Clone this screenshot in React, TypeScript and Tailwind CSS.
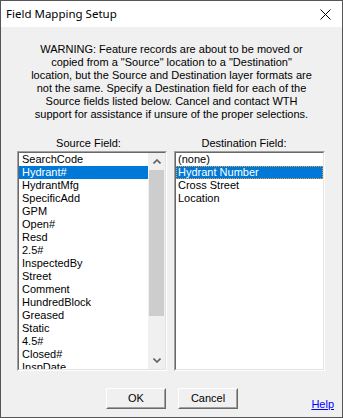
import React from "react";

const sourceFields = [
  "SearchCode",
  "Hydrant#",
  "HydrantMfg",
  "SpecificAdd",
  "GPM",
  "Open#",
  "Resd",
  "2.5#",
  "InspectedBy",
  "Street",
  "Comment",
  "HundredBlock",
  "Greased",
  "Static",
  "4.5#",
  "Closed#",
  "InspDate",
];

const destFields = ["(none)", "Hydrant Number", "Cross Street", "Location"];

function Chevron({ up }: { up: boolean }) {
  return (
    <svg width="8" height="5" viewBox="0 0 8 5" className="block">
      <path
        d={up ? "M0.5 4.5 L4 1 L7.5 4.5" : "M0.5 0.5 L4 4 L7.5 0.5"}
        stroke="#606060"
        strokeWidth="1.6"
        fill="none"
      />
    </svg>
  );
}

export default function App() {
  return (
    <div
      className="w-[343px] h-[418px] border border-[#555555] bg-[#f0f0f0] flex flex-col text-black overflow-hidden"
      style={{ fontFamily: '"Liberation Sans", Arial, sans-serif' }}
    >
      {/* Title bar */}
      <div className="h-[26px] bg-white flex items-center justify-between pl-[5px] pr-[11px] shrink-0">
        <span
          className="text-[11.5px] leading-none"
          style={{ fontFamily: '"Noto Sans", "Open Sans", sans-serif' }}
        >
          Field Mapping Setup
        </span>
        <svg width="11" height="11" viewBox="0 0 11 11">
          <path d="M0.5 0.5 L10.5 10.5 M10.5 0.5 L0.5 10.5" stroke="#000" strokeWidth="1" />
        </svg>
      </div>

      {/* Body */}
      <div className="flex-1 flex flex-col">
        <p className="mt-[16px] text-center text-[11px] leading-[13px]">
          WARNING: Feature records are about to be moved or
          <br />
          copied from a &quot;Source&quot; location to a &quot;Destination&quot;
          <br />
          location, but the Source and Destination layer formats are
          <br />
          not the same. Specify a Destination field for each of the
          <br />
          Source fields listed below. Cancel and contact WTH
          <br />
          support for assistance if unsure of the proper selections.
        </p>

        <div className="mt-[16px] flex pl-[16px] gap-[7px]">
          {/* Source column */}
          <div className="w-[150px] flex flex-col">
            <div className="text-center text-[11px] leading-[13px] pr-[7px]">Source Field:</div>
            <div className="mt-[1px] h-[220px] border-t-[#a0a0a0] border-l-[#a0a0a0] border-b-white border-r-white border">
              <div className="h-full border border-t-[#696969] border-l-[#696969] border-b-[#e3e3e3] border-r-[#e3e3e3] bg-white flex overflow-hidden">
                <div className="flex-1 flex flex-col overflow-hidden">
                  {sourceFields.map((f, i) => (
                    <div
                      key={f}
                      className={
                        "h-[13px] shrink-0 pl-[3px] text-[11px] leading-[13px] whitespace-nowrap " +
                        (i === 1 ? "bg-[#0078d7] text-white" : "")
                      }
                    >
                      {f}
                    </div>
                  ))}
                </div>
                <div className="w-[17px] shrink-0 bg-[#f0f0f0] flex flex-col">
                  <div className="h-[17px] flex items-center justify-center">
                    <Chevron up />
                  </div>
                  <div className="h-[146px] bg-[#cdcdcd] mx-[1px]" />
                  <div className="flex-1" />
                  <div className="h-[17px] flex items-center justify-center">
                    <Chevron up={false} />
                  </div>
                </div>
              </div>
            </div>
          </div>

          {/* Destination column */}
          <div className="w-[151px] flex flex-col">
            <div className="text-center text-[11px] leading-[13px] pr-[11px]">Destination Field:</div>
            <div className="mt-[1px] h-[220px] border-t-[#a0a0a0] border-l-[#a0a0a0] border-b-white border-r-white border">
              <div className="h-full border border-t-[#696969] border-l-[#696969] border-b-[#e3e3e3] border-r-[#e3e3e3] bg-white flex flex-col overflow-hidden">
                {destFields.map((f, i) => (
                  <div
                    key={f}
                    className={
                      "h-[13px] shrink-0 pl-[2px] text-[11px] leading-[13px] whitespace-nowrap " +
                      (i === 1
                        ? "bg-[#0078d7] text-white outline-1 outline-dotted outline-[#f0a030] -outline-offset-1"
                        : "")
                    }
                  >
                    {f}
                  </div>
                ))}
              </div>
            </div>
          </div>
        </div>

        {/* Buttons */}
        <div className="mt-[17px] flex items-start">
          <div className="ml-[105px] flex gap-[12px]">
            <button className="w-[60px] h-[21px] bg-[#f0f0f0] border border-t-white border-l-white border-b-[#696969] border-r-[#696969] text-[11px] leading-none">
              <span className="block h-full border border-transparent border-b-[#a0a0a0] border-r-[#a0a0a0] flex items-center justify-center">
                OK
              </span>
            </button>
            <button className="w-[60px] h-[21px] bg-[#f0f0f0] border border-t-white border-l-white border-b-[#696969] border-r-[#696969] text-[11px] leading-none">
              <span className="block h-full border border-transparent border-b-[#a0a0a0] border-r-[#a0a0a0] flex items-center justify-center">
                Cancel
              </span>
            </button>
          </div>
          <a className="ml-auto mr-[8px] mt-[10px] text-[11px] leading-[13px] text-[#0000ff] underline">
            Help
          </a>
        </div>
      </div>
    </div>
  );
}
